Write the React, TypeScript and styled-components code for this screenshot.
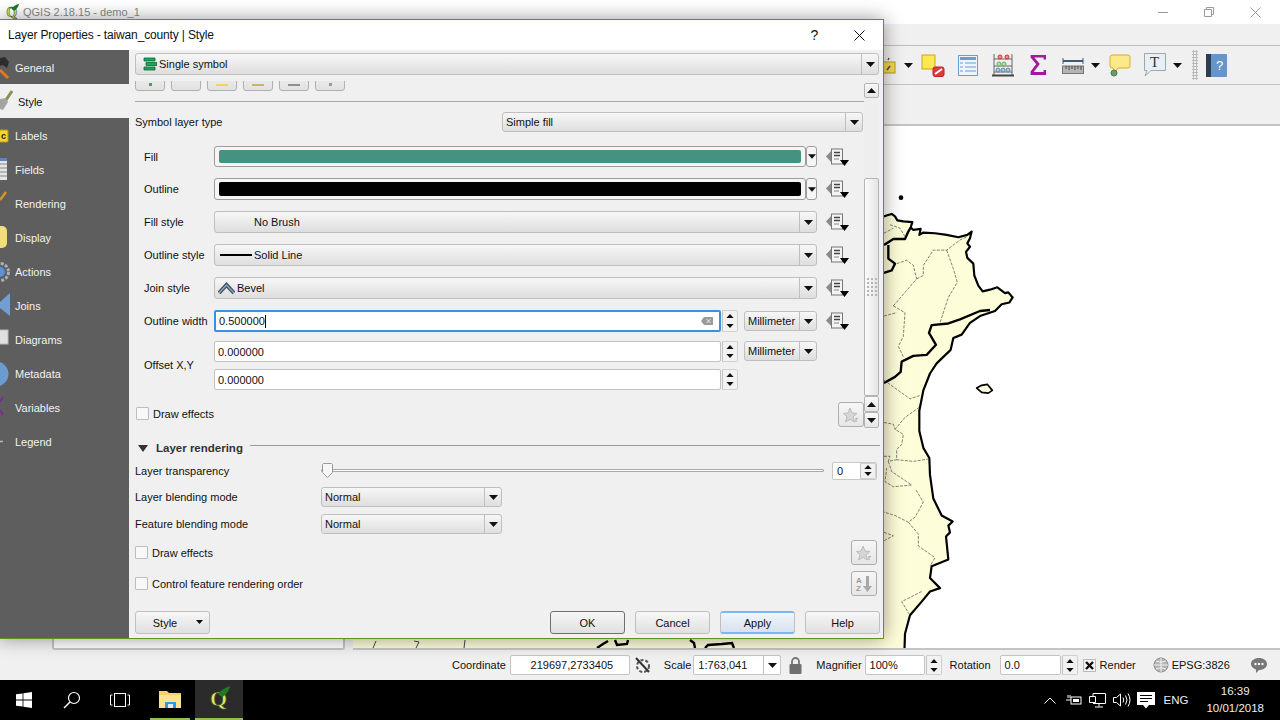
import styled, { createGlobalStyle } from "styled-components";

const GlobalStyle = createGlobalStyle`
  html, body { margin: 0; padding: 0; background: #f0f0f0; overflow: hidden; }
  body { font-family: "Liberation Sans", Arial, sans-serif; font-size: 11px; color: #111; }
  * { box-sizing: border-box; }
`;

const Arrow = ({ up }: { up?: boolean }) => (
  <svg width="9" height="5" viewBox="0 0 9 5">
    <path d={up ? "M0 5 L4.5 0 L9 5Z" : "M0 0 L9 0 L4.5 5Z"} fill="#111" />
  </svg>
);

const DataDefined = () => (
  <svg width="24" height="18" viewBox="0 0 24 18">
    <path d="M0 8.5 L6 2 V15Z" fill="#8a8a8a" />
    <rect x="5.5" y="1" width="11" height="15" fill="#f4f4f4" stroke="#777" />
    <path d="M8 4.5h6M8 7.5h6" stroke="#444" strokeWidth="1.4" />
    <path d="M8 11h5" stroke="#888" />
    <path d="M14 12 H23 L18.5 18Z" fill="#000" />
  </svg>
);

const StarIcon = () => (
  <svg width="16" height="16" viewBox="0 0 16 16">
    <path d="M7 1 L9 6 L14 6.5 L10 10 L11.5 15 L7 12.3 L2.5 15 L4 10 L0.5 6.5 L5 6Z" fill="#d6d6d6" stroke="#bcbcbc" />
    <path d="M13 11v4M13 12q1-1 2-.5" stroke="#aaa" fill="none" />
  </svg>
);

const SortIcon = () => (
  <svg width="18" height="18" viewBox="0 0 18 18">
    <text x="1" y="8" fontSize="8" fontWeight="700" fill="#9a9a9a" fontFamily="Liberation Sans">A</text>
    <text x="1" y="16" fontSize="8" fontWeight="700" fill="#9a9a9a" fontFamily="Liberation Sans">Z</text>
    <path d="M11 1h3v10h3l-4.5 6L8 11h3Z" fill="#a8a8a8" />
  </svg>
);

const QLogo = ({ size }: { size: number }) => (
  <svg width={size} height={size} viewBox="0 0 28 28">
    <text x="5" y="21" fontSize="22" fontWeight="700" fontFamily="Liberation Serif" fill="#dbe76e" stroke="#2c3816" strokeWidth=".7">Q</text>
    <path d="M13 9 C15 6 19 3 25 1 C24 6 21 10 17 12Z" fill="#1f7a22" />
  </svg>
);

const sideIcons: Record<string, React.ReactNode> = {
  General: (
    <>
      <path d="M0 8 L5 7 L9 12 L7 18 L3 15 L0 16Z" fill="#2c2c2c" />
      <path d="M0 20 L8 28" stroke="#e57a17" strokeWidth="3" />
    </>
  ),
  Style: (
    <>
      <path d="M12 7 L6 16" stroke="#8b8d55" strokeWidth="3" />
      <path d="M0 15 L6 14 L8 18 L3 26 L0 25Z" fill="#a5a5a0" />
    </>
  ),
  Labels: (
    <>
      <rect x="-3" y="12" width="11" height="12" rx="1" fill="#f2d330" stroke="#b99a10" />
      <text x="1" y="21" fontSize="9" fontWeight="700" fill="#222" fontFamily="Liberation Sans">c</text>
    </>
  ),
  Fields: (
    <>
      <rect x="-2" y="6" width="9" height="22" fill="#e4e4e4" />
      <rect x="-2" y="6" width="9" height="3" fill="#5c86b8" />
      <path d="M0 12h7M0 16h7M0 20h7M0 24h7" stroke="#888" />
    </>
  ),
  Rendering: <path d="M6 6 L0 14" stroke="#d9912b" strokeWidth="2.5" />,
  Display: <rect x="-6" y="6" width="13" height="22" rx="5" fill="#f3de7c" />,
  Actions: (
    <>
      <circle cx="0" cy="18" r="8.5" fill="none" stroke="#aab0b8" strokeWidth="3" strokeDasharray="3 1.5" />
      <circle cx="0" cy="18" r="5" fill="#5b92d0" />
    </>
  ),
  Joins: <path d="M10 5 V28 L0 20 V14Z" fill="#6f9fd6" />,
  Diagrams: <rect x="-2" y="8" width="10" height="14" fill="#e0e0dc" stroke="#bbb" />,
  Metadata: <circle cx="-4" cy="18" r="12.5" fill="#6c9bd2" />,
  Variables: <path d="M3 7 L0 12 M0 20 L3 25" stroke="#7a2f8e" strokeWidth="2" />,
  Legend: <path d="M0 17.5h3" stroke="#bbb" strokeWidth="1.5" />,
};

const sideItems = ["General", "Style", "Labels", "Fields", "Rendering", "Display", "Actions", "Joins", "Diagrams", "Metadata", "Variables", "Legend"];

const Combo = ({ children, w }: { children?: React.ReactNode; w?: number }) => (
  <ComboBox $w={w}>
    <ComboText>{children}</ComboText>
    <ComboArrow>
      <Arrow />
    </ComboArrow>
  </ComboBox>
);

const Spin = () => (
  <SpinBox>
    <SpinPart>
      <Arrow up />
    </SpinPart>
    <SpinPart>
      <Arrow />
    </SpinPart>
  </SpinBox>
);

const ColorRow = ({ label, color }: { label: string; color: string }) => (
  <FormRow $h={label === "Fill" ? 21 : 22}>
    <span>{label}</span>
    <ColorCell>
      <ColorButton>
        <Swatch $color={color} />
      </ColorButton>
      <ColorDrop>
        <Arrow />
      </ColorDrop>
    </ColorCell>
    <DataDefined />
  </FormRow>
);

const mapCoast =
  "M12 285 L22 282 L35 278 L45 285 L52 297 L70 300 L97 302 L92 318 L100 325 L122 322 L118 340 L130 333 L165 335 L200 340 L235 347 L262 340 L275 330 L270 350 L262 365 L270 375 L258 390 L262 408 L280 425 L283 460 L295 490 L308 507 L330 502 L352 495 L375 512 L385 510 L398 525 L388 540 L365 545 L345 565 L300 580 L270 600 L245 635 L220 645 L212 680 L170 720 L150 750 L130 800 L118 860 L118 920 L130 970 L148 1000 L150 1050 L160 1120 L185 1170 L218 1188 L205 1200 L210 1220 L198 1232 L205 1300 L155 1320 L150 1355 L180 1385 L150 1395 L125 1425 L90 1465 L75 1520 L73 1580";

const MapDrawing = () => (
  <svg width="100%" height="100%" viewBox="353 126 927 522" preserveAspectRatio="none">
    <g transform="translate(880 120) scale(.3333 .338)" fill="none" strokeLinejoin="round">
      <path d={`${mapCoast} L-1590 1580 L-1590 285Z`} fill="#fdfdd9" />
      <path d={mapCoast} stroke="#000" strokeWidth="6.5" />
      <path
        d="M330 562 L300 565 L240 590 L205 602 L155 607 L147 630 L168 665 L140 695 L100 698 L65 715 L62 745 L45 760 L12 778 M12 370 L40 352 L75 352 L85 330 L92 318 M25 370 L25 410 L45 425 L35 445 L12 452"
        stroke="#000"
        strokeWidth="7"
      />
      <path
        d="M40 550 L75 570 L70 640 L55 670 L70 700 M12 580 L50 570 M40 550 L110 470 L100 430 L80 415 L50 425 M110 470 L130 460 L130 430 L160 385 L200 385 L240 355 L262 345 M200 385 L220 440 L232 480 L205 525 L180 600 M12 770 L55 800 L90 825 L120 815 M118 850 L75 880 L45 915 L70 930 L65 960 L50 975 L50 1005 L100 1010 L145 1003 M12 895 L40 900 L45 915 M12 995 L30 995 L25 1010 L50 1005 M25 1010 L35 1040 L80 1070 L95 1080 L40 1085 L15 1070 L20 1030 M108 1095 L130 1130 L105 1175 L85 1190 L45 1170 L12 1160 M85 1190 L115 1225 L115 1260 L165 1295 L150 1320 M125 1395 L65 1425 L90 1465 M12 1220 L40 1230 L12 1245 M30 310 L60 320 L75 345 M12 335 L40 320"
        stroke="#444"
        strokeWidth="2"
        strokeDasharray="9 4"
      />
      <path d="M290 793 L305 785 L322 782 L337 800 L325 808 L305 806Z" fill="#fdfdd9" stroke="#000" strokeWidth="5" />
      <circle cx="63" cy="230" r="7" fill="#000" />
    </g>
    <path d="M597 648 L603 644 L608 641 M615 640 L617 645 L627 644 L628 640 M690 640 L694 643 L695 648 M705 648 L708 645 L722 644 L732 643 L734 648" stroke="#000" strokeWidth="2.4" fill="none" />
    <path d="M373 648 L376 641 M414 641 L419 642 L416 648 M465 640 L464 648" stroke="#444" strokeWidth="1" fill="none" />
  </svg>
);

function App() {
  return (
    <Screen>
      <GlobalStyle />
      <MainWindow>
        <TitleBar>
          <QLogo size={18} />
          <MainTitle>QGIS 2.18.15 - demo_1</MainTitle>
          <WindowButtons>
            <WindowButton>
              <svg width="10" height="10" viewBox="0 0 10 10"><path d="M0 5.5h10" stroke="#999" /></svg>
            </WindowButton>
            <WindowButton>
              <svg width="10" height="10" viewBox="0 0 10 10"><path d="M2.5 2.5V.5h7v7h-2M.5 2.5h7v7h-7Z" stroke="#999" fill="none" /></svg>
            </WindowButton>
            <WindowButton>
              <svg width="11" height="11" viewBox="0 0 11 11"><path d="M.5.5l10 10M10.5.5l-10 10" stroke="#999" /></svg>
            </WindowButton>
          </WindowButtons>
        </TitleBar>
        <MenuBar />
        <ToolBar>
          <ToolSlot $w={16}>
            <svg width="16" height="18" viewBox="0 0 16 18"><rect x="-6" y="6" width="17" height="11" fill="#f2d84f" stroke="#b89c1c" /><path d="M3 14l3-4M4 4l1-2" stroke="#4d3c7a" strokeWidth="1.5" /></svg>
          </ToolSlot>
          <ToolSlot $w={16}><Arrow /></ToolSlot>
          <ToolSlot $w={5} />
          <ToolSlot $w={24}>
            <svg width="24" height="24" viewBox="0 0 24 24"><rect x="1" y="2" width="13" height="14" fill="#fde94f" stroke="#caa51c" /><rect x="12" y="14" width="11" height="9.5" rx="2" fill="#e33a3a" stroke="#b22" /><path d="M14 21l7-5" stroke="#fff" strokeWidth="2" /></svg>
          </ToolSlot>
          <ToolSlot $w={13} />
          <ToolSlot $w={20}>
            <svg width="20" height="21" viewBox="0 0 20 21"><rect x=".5" y=".5" width="19" height="20" fill="#edf4fc" stroke="#6d9ccf" /><rect x="2" y="2" width="16" height="3" fill="#6d9ccf" /><path d="M2 8h3M7 8h11M2 12h3M7 12h11M2 16h3M7 16h11" stroke="#6d9ccf" /></svg>
          </ToolSlot>
          <ToolSlot $w={14} />
          <ToolSlot $w={22}>
            <svg width="22" height="23" viewBox="0 0 22 23"><path d="M2 0v21M20 0v21M2 5h18M2 12h18M2 18h18" stroke="#666" /><path d="M0 21.5h22" stroke="#444" strokeWidth="2" /><circle cx="8" cy="3" r="2" fill="#ee8c8c" stroke="#c33" /><circle cx="15" cy="3" r="2" fill="#ee8c8c" stroke="#c33" /><circle cx="7" cy="10" r="2" fill="#bde0a8" stroke="#6a6" /><circle cx="12" cy="10" r="2" fill="#bde0a8" stroke="#6a6" /><circle cx="6" cy="16" r="2" fill="#a9cbe6" stroke="#58a" /><circle cx="11" cy="16" r="2" fill="#a9cbe6" stroke="#58a" /><circle cx="16" cy="16" r="2" fill="#a9cbe6" stroke="#58a" /></svg>
          </ToolSlot>
          <ToolSlot $w={15} />
          <ToolSlot $w={18}>
            <svg width="16" height="20" viewBox="0 0 16 20"><path d="M15 4.5V1H2v1l6 7-6 8v1.5h13V15" fill="none" stroke="#a01a9e" strokeWidth="2.8" /></svg>
          </ToolSlot>
          <ToolSlot $w={15} />
          <ToolSlot $w={22}>
            <svg width="22" height="18" viewBox="0 0 22 18"><path d="M1 2v6M21 2v6" stroke="#3c5a7a" /><path d="M1 5h20" stroke="#3c5a7a" strokeWidth="2" /><rect x=".5" y="10" width="21" height="7.5" fill="#b4b4b4" stroke="#777" /><path d="M4 10v3M7 10v4M10 10v3M13 10v4M16 10v3M19 10v4" stroke="#444" /></svg>
          </ToolSlot>
          <ToolSlot $w={22}><Arrow /></ToolSlot>
          <ToolSlot $w={3} />
          <ToolSlot $w={22}>
            <svg width="22" height="23" viewBox="0 0 22 23"><path d="M4 1h15q2 0 2 2v9q0 2-2 2H9l-3 4-2-4q-3 0-3-2V3q0-2 3-2Z" fill="#fbe98a" stroke="#d9ad22" /><circle cx="5" cy="19" r="3" fill="#6d9b6a" stroke="#4c7a4a" /></svg>
          </ToolSlot>
          <ToolSlot $w={13} />
          <ToolSlot $w={22}>
            <svg width="22" height="24" viewBox="0 0 22 24"><path d="M.5.5h21v17H7L1 23l2-5.5H.5Z" fill="#e9f0f5" stroke="#9aa" /><text x="6" y="14" fontSize="15" fontFamily="Liberation Serif" fill="#333">T</text></svg>
          </ToolSlot>
          <ToolSlot $w={22}><Arrow /></ToolSlot>
          <ToolSlot $w={4} />
          <Grip />
          <ToolSlot $w={8} />
          <ToolSlot $w={21}>
            <svg width="21" height="23" viewBox="0 0 21 23"><rect x="0" y="0" width="21" height="23" rx="1" fill="#6595c9" /><rect x="0" y="0" width="5" height="23" fill="#2c3e50" /><text x="10" y="16" fontSize="13" fill="#fff" fontFamily="Liberation Sans">?</text></svg>
          </ToolSlot>
        </ToolBar>
        <ToolBarEmpty />
        <Workspace>
          <LeftDock />
          <MapFrame>
            <MapDrawing />
          </MapFrame>
        </Workspace>
        <StatusBar>
          <StatusLabel>Coordinate</StatusLabel>
          <StatusInput $w={120}>
            <CenterText>219697,2733405</CenterText>
          </StatusInput>
          <StatusIcon $ml={5} $w={16}>
            <svg width="16" height="17" viewBox="0 0 16 17"><circle cx="8" cy="9" r="6" fill="none" stroke="#555" strokeWidth="2" strokeDasharray="3 2" /><path d="M1 1l13 14" stroke="#333" strokeWidth="2" /></svg>
          </StatusIcon>
          <StatusLabel $ml={13}>Scale</StatusLabel>
          <ScaleCombo>
            <ScaleValue>1:763,041</ScaleValue>
            <ComboArrow><Arrow /></ComboArrow>
          </ScaleCombo>
          <StatusIcon $ml={8} $w={13}>
            <svg width="13" height="17" viewBox="0 0 13 17"><path d="M3 8V4.5a3.5 3.5 0 0 1 7 0V8" fill="none" stroke="#777" strokeWidth="1.8" /><rect x="0.5" y="7" width="12" height="10" rx="1" fill="#6f6f6f" /></svg>
          </StatusIcon>
          <StatusLabel $ml={14}>Magnifier</StatusLabel>
          <StatusInput $w={60} $ml={3}>100%</StatusInput>
          <StatusSpin><Spin /></StatusSpin>
          <StatusLabel $ml={8}>Rotation</StatusLabel>
          <StatusInput $w={61} $ml={9}>0.0</StatusInput>
          <StatusSpin><Spin /></StatusSpin>
          <RenderCheck>
            <svg width="9" height="9" viewBox="0 0 9 9"><path d="M1 1l7 7M8 1L1 8" stroke="#111" strokeWidth="2.4" /></svg>
          </RenderCheck>
          <StatusLabel $ml={4}>Render</StatusLabel>
          <StatusIcon $ml={17} $w={16}>
            <svg width="16" height="16" viewBox="0 0 16 16"><circle cx="8" cy="8" r="7" fill="#b5b5b5" stroke="#888" /><path d="M1 8h14M8 1v14M3 4q5 2.5 10 0M3 12q5-2.5 10 0" stroke="#f2f2f2" fill="none" /></svg>
          </StatusIcon>
          <StatusLabel $ml={3}>EPSG:3826</StatusLabel>
          <StatusIcon $ml={21} $w={16}>
            <svg width="16" height="15" viewBox="0 0 16 15"><path d="M8 0c4.5 0 8 2.5 8 6s-3.500 6-8 6l-3 3v-3.5C2 10.5 0 8.5 0 6c0-3.5 3.5-6 8-6Z" fill="#777" /><circle cx="4.5" cy="6" r="1.2" fill="#fff" /><circle cx="8" cy="6" r="1.2" fill="#fff" /><circle cx="11.5" cy="6" r="1.2" fill="#fff" /></svg>
          </StatusIcon>
        </StatusBar>
      </MainWindow>

      <TaskBar>
        <TaskSlot $w={48}>
          <svg width="16" height="16" viewBox="0 0 16 16"><path d="M0 2.3l6.6-.9v6.2H0ZM7.400 1.300L16 0v7.600H7.400ZM0 8.400h6.600v6.200L0 13.700ZM7.400 8.400H16V16l-8.600-1.300Z" fill="#fff" /></svg>
        </TaskSlot>
        <TaskSlot $w={48}>
          <svg width="18" height="18" viewBox="0 0 18 18"><circle cx="11" cy="7" r="5.5" fill="none" stroke="#fff" strokeWidth="1.2" /><path d="M7 11l-6 6" stroke="#fff" strokeWidth="1.5" /></svg>
        </TaskSlot>
        <TaskSlot $w={48}>
          <svg width="20" height="14" viewBox="0 0 20 14"><path d="M2.5 2H.5v10h2M17.5 2h2v10h-2" fill="none" stroke="#fff" /><rect x="4.5" y=".5" width="11" height="13" fill="none" stroke="#fff" /></svg>
        </TaskSlot>
        <TaskSlot $w={40} $open $ml={6}>
          <svg width="22" height="18" viewBox="0 0 22 18"><path d="M0 1h8l2 2h12v15H0Z" fill="#f6d365" /><path d="M0 5h22v13H0Z" fill="#fbe394" /><rect x="6" y="12" width="11" height="6" fill="#2d9bdc" /><rect x="9" y="14" width="5" height="4" fill="#d8f0fc" /></svg>
        </TaskSlot>
        <TaskSlot $w={48} $open $active $ml={5}>
          <QLogo size={28} />
        </TaskSlot>
        <Tray>
          <TrayIcon $w={24}>
            <svg width="12" height="7" viewBox="0 0 12 7"><path d="M.5 6.5L6 1l5.5 5.5" fill="none" stroke="#fff" /></svg>
          </TrayIcon>
          <TrayIcon $w={24}>
            <svg width="16" height="12" viewBox="0 0 16 12"><rect x="5" y="3" width="10" height="7" fill="none" stroke="#fff" /><rect x="7" y="5" width="6" height="3" fill="#fff" /><path d="M0 6h5M2 1v3M4 1v3" stroke="#fff" /></svg>
          </TrayIcon>
          <TrayIcon $w={24}>
            <svg width="17" height="15" viewBox="0 0 17 15"><path d="M4 3.5V.5h12.5v10H4M.5 3.5h6v6h-6ZM10 10.5v3M6 14h8" fill="none" stroke="#fff" /></svg>
          </TrayIcon>
          <TrayIcon $w={24}>
            <svg width="18" height="14" viewBox="0 0 18 14"><path d="M.5 4.5h3l4-3.500v12l-4-3.500h-3Z M10 4.500q1.500 2.500 0 5M12.500 2.500q3 4.500 0 9M15 .5q4 6.500 0 13" fill="none" stroke="#fff" /></svg>
          </TrayIcon>
          <TrayIcon $w={24}>
            <svg width="18" height="17" viewBox="0 0 18 17"><path d="M0 0h18v13h-6l-3 3.500L6 13H0Z" fill="#fff" /><path d="M3 3.500h12M3 6.500h12M3 9.500h8" stroke="#000" /></svg>
          </TrayIcon>
          <TrayText>ENG</TrayText>
          <Clock>
            <span>16:39</span>
            <span>10/01/2018</span>
          </Clock>
        </Tray>
      </TaskBar>

      <Dialog>
        <DialogTitle>
          <DialogTitleText>Layer Properties - taiwan_county | Style</DialogTitleText>
          <DialogHelp>?</DialogHelp>
          <DialogClose>
            <svg width="11" height="11" viewBox="0 0 11 11"><path d="M.5.5l10 10M10.5.5l-10 10" stroke="#111" /></svg>
          </DialogClose>
        </DialogTitle>
        <DialogBody>
          <SideBar>
            {sideItems.map((item) => (
              <SideItem key={item} $active={item === "Style"}>
                <SideIcon $wide={item === "Style"} viewBox={`0 0 ${item === "Style" ? 18 : 15} 34`}>
                  {sideIcons[item]}
                </SideIcon>
                <SideLabel>{item}</SideLabel>
              </SideItem>
            ))}
          </SideBar>
          <Content>
            <RendererCombo>
              <ComboText>
                <svg width="14" height="14" viewBox="0 0 14 14"><path d="M1 1h11v3H1ZM3 5.500h11v3H3ZM1 10h11v3H1Z" fill="#1aa55b" stroke="#0b6b38" strokeWidth=".8" /></svg>
                Single symbol
              </ComboText>
              <ComboArrow><Arrow /></ComboArrow>
            </RendererCombo>
            <ScrollArea>
              <ScrollContent>
                <SymbolButtons>
                  {["#5b9a5b", "", "#f2d84f", "#c8b46a", "#8f8f8f", "#999"].map((c, i) => (
                    <SymbolButton key={i}>{c && <SymbolMark $color={c} $wide={i === 2 || i === 3 || i === 4} />}</SymbolButton>
                  ))}
                </SymbolButtons>
                <Separator />
                <SymbolType>
                  <span>Symbol layer type</span>
                  <Combo w={361}>Simple fill</Combo>
                </SymbolType>
                <Form>
                  <ColorRow label="Fill" color="#459280" />
                  <ColorRow label="Outline" color="#000" />
                  <FormRow>
                    <span>Fill style</span>
                    <Combo>
                      <NoBrush>No Brush</NoBrush>
                    </Combo>
                    <DataDefined />
                  </FormRow>
                  <FormRow>
                    <span>Outline style</span>
                    <Combo>
                      <LineSample />
                      Solid Line
                    </Combo>
                    <DataDefined />
                  </FormRow>
                  <FormRow>
                    <span>Join style</span>
                    <Combo>
                      <svg width="17" height="14" viewBox="0 0 17 14"><path d="M1 12L8.5 4 16 12" fill="none" stroke="#3d4f5f" strokeWidth="4" /><path d="M1 12L8.5 4 16 12" fill="none" stroke="#86a6c4" strokeWidth="1.5" /></svg>
                      Bevel
                    </Combo>
                    <DataDefined />
                  </FormRow>
                  <FormRow>
                    <span>Outline width</span>
                    <InputCell>
                      <TextInput $focus>
                        0.500000
                        <Caret />
                        <ClearIcon>
                          <svg width="12" height="8" viewBox="0 0 12 8"><path d="M3 0h9v8H3L0 4Z" fill="#9a9a9a" /><path d="M5.5 2l4 4M9.5 2l-4 4" stroke="#eee" /></svg>
                        </ClearIcon>
                      </TextInput>
                      <Spin />
                      <Combo w={73}>Millimeter</Combo>
                    </InputCell>
                    <DataDefined />
                  </FormRow>
                  <OffsetBlock>
                    <OffsetLabel>Offset X,Y</OffsetLabel>
                    <OffsetInputs>
                      <InputCell>
                        <TextInput>0.000000</TextInput>
                        <Spin />
                        <Combo w={73}>Millimeter</Combo>
                      </InputCell>
                      <InputCell>
                        <TextInput>0.000000</TextInput>
                        <Spin />
                        <UnitSpacer />
                      </InputCell>
                    </OffsetInputs>
                  </OffsetBlock>
                </Form>
                <EffectsRow>
                  <EffectsCheck>
                    <Check />
                    Draw effects
                  </EffectsCheck>
                  <IconButton><StarIcon /></IconButton>
                </EffectsRow>
              </ScrollContent>
              <ScrollBar>
                <ScrollButton $h={15}><Arrow up /></ScrollButton>
                <ScrollTrack />
                <ScrollThumb>
                  <ThumbGrip />
                </ScrollThumb>
                <ScrollButton $h={16}><Arrow up /></ScrollButton>
                <ScrollButton $h={16}><Arrow /></ScrollButton>
              </ScrollBar>
            </ScrollArea>

            <GroupHeader>
              <svg width="10" height="7" viewBox="0 0 10 7"><path d="M0 0h10L5 7Z" fill="#333" /></svg>
              <GroupTitle>Layer rendering</GroupTitle>
              <GroupLine />
            </GroupHeader>

            <RenderRow $mt={3} $h={19}>
              <RenderLabel>Layer transparency</RenderLabel>
              <SliderGroove>
                <SliderHandle>
                  <svg width="11" height="15" viewBox="0 0 11 15"><path d="M1.5.5h8l1 1v8l-5 5-5-5v-8Z" fill="#f6f6f6" stroke="#999" /></svg>
                </SliderHandle>
              </SliderGroove>
              <SpinField>
                0
                <Spin />
              </SpinField>
            </RenderRow>
            <RenderRow $mt={7} $h={20}>
              <RenderLabel>Layer blending mode</RenderLabel>
              <Combo w={181}>Normal</Combo>
            </RenderRow>
            <RenderRow $mt={7} $h={20}>
              <RenderLabel>Feature blending mode</RenderLabel>
              <Combo w={181}>Normal</Combo>
            </RenderRow>
            <RenderRow $mt={6} $h={25}>
              <CheckLabel>
                <Check />
                Draw effects
              </CheckLabel>
              <IconButton $end><StarIcon /></IconButton>
            </RenderRow>
            <RenderRow $mt={6} $h={25}>
              <CheckLabel>
                <Check />
                Control feature rendering order
              </CheckLabel>
              <IconButton $end><SortIcon /></IconButton>
            </RenderRow>

            <ButtonRow>
              <StyleButton>
                Style
                <svg width="7" height="4" viewBox="0 0 7 4"><path d="M0 0h7L3.5 4Z" fill="#111" /></svg>
              </StyleButton>
              <ButtonGroup>
                <PushButton $kind="default">OK</PushButton>
                <PushButton>Cancel</PushButton>
                <PushButton $kind="hover">Apply</PushButton>
                <PushButton>Help</PushButton>
              </ButtonGroup>
            </ButtonRow>
          </Content>
        </DialogBody>
      </Dialog>
    </Screen>
  );
}

const Screen = styled.div`
  position: relative;
  width: 1280px;
  height: 720px;
  display: flex;
  flex-direction: column;
  overflow: hidden;
`;

const MainWindow = styled.div`
  height: 680px;
  display: flex;
  flex-direction: column;
  background: #f0f0f0;
`;

const TitleBar = styled.div`
  height: 24px;
  background: #fff;
  display: flex;
  align-items: center;
  padding-left: 3px;
  flex: none;
`;

const MainTitle = styled.div`
  font-size: 11px;
  color: #8a8a8a;
  margin-left: 2px;
`;

const WindowButtons = styled.div`
  margin-left: auto;
  margin-right: 2px;
  display: flex;
`;

const WindowButton = styled.div`
  width: 46px;
  height: 22px;
  display: flex;
  align-items: center;
  justify-content: center;
`;

const MenuBar = styled.div`
  height: 22px;
  border-bottom: 1px solid #bdbdbd;
  flex: none;
`;

const ToolBar = styled.div`
  height: 39px;
  flex: none;
  border-bottom: 1px solid #c4c4c4;
  display: flex;
  align-items: center;
  padding-left: 884px;
`;

const ToolSlot = styled.div<{ $w: number }>`
  width: ${(p) => p.$w}px;
  display: flex;
  align-items: center;
  justify-content: center;
  overflow: hidden;
  flex: none;
`;

const Grip = styled.div`
  width: 6px;
  height: 30px;
  flex: none;
  background-image: radial-gradient(#bbb 1px, transparent 1.2px);
  background-size: 3px 3px;
`;

const ToolBarEmpty = styled.div`
  height: 39px;
  flex: none;
`;

const Workspace = styled.div`
  height: 526px;
  flex: none;
  display: flex;
  padding-left: 52px;
  gap: 8px;
`;

const LeftDock = styled.div`
  width: 293px;
  background: #fff;
  border: 2px solid #c4c4c4;
  border-top: 0;
  border-radius: 0 0 3px 3px;
  flex: none;
`;

const MapFrame = styled.div`
  flex: 1;
  background: #fff;
  border-top: 2px solid #c4c4c4;
  border-bottom: 2px solid #c4c4c4;
  overflow: hidden;
  svg {
    display: block;
  }
`;

const StatusBar = styled.div`
  flex: 1;
  display: flex;
  align-items: center;
  padding-left: 452px;
`;

const StatusLabel = styled.span<{ $ml?: number }>`
  margin-left: ${(p) => p.$ml ?? 0}px;
  flex: none;
`;

const StatusInput = styled.div<{ $w: number; $ml?: number }>`
  width: ${(p) => p.$w}px;
  height: 20px;
  margin-left: ${(p) => p.$ml ?? 4}px;
  background: #fff;
  border: 1px solid #c4c4c4;
  border-radius: 2px;
  display: flex;
  align-items: center;
  padding-left: 4px;
  flex: none;
`;

const CenterText = styled.span`
  width: 100%;
  text-align: center;
`;

const StatusIcon = styled.div<{ $ml: number; $w: number }>`
  margin-left: ${(p) => p.$ml}px;
  width: ${(p) => p.$w}px;
  display: flex;
  flex: none;
`;

const ScaleCombo = styled.div`
  width: 88px;
  height: 20px;
  margin-left: 2px;
  background: #fff;
  border: 1px solid #c4c4c4;
  border-radius: 2px;
  display: flex;
  flex: none;
`;

const ScaleValue = styled.span`
  flex: 1;
  padding-left: 4px;
  line-height: 18px;
`;

const StatusSpin = styled.div`
  height: 20px;
  flex: none;
  display: flex;
`;

const RenderCheck = styled.div`
  width: 13px;
  height: 13px;
  margin-left: 5px;
  background: #f4f4f4;
  border: 1px solid #bbb;
  display: flex;
  align-items: center;
  justify-content: center;
  flex: none;
`;

const TaskBar = styled.div`
  height: 40px;
  background: #000;
  display: flex;
  flex: none;
  color: #fff;
`;

const TaskSlot = styled.div<{ $w: number; $open?: boolean; $active?: boolean; $ml?: number }>`
  width: ${(p) => p.$w}px;
  margin-left: ${(p) => p.$ml ?? 0}px;
  display: flex;
  align-items: center;
  justify-content: center;
  background: ${(p) => (p.$active ? "#2b2b2b" : "transparent")};
  border-bottom: ${(p) => (p.$open ? "2px solid #8ec24e" : "0")};
  flex: none;
`;

const Tray = styled.div`
  margin-left: auto;
  display: flex;
  align-items: center;
  padding-right: 16px;
`;

const TrayIcon = styled.div<{ $w: number }>`
  width: ${(p) => p.$w}px;
  display: flex;
  justify-content: center;
`;

const TrayText = styled.span`
  margin-left: 6px;
  font-size: 11.5px;
  color: #eee;
`;

const Clock = styled.div`
  margin-left: 18px;
  display: flex;
  flex-direction: column;
  align-items: center;
  font-size: 11.5px;
  line-height: 17px;
  color: #eee;
`;

const Dialog = styled.div`
  position: absolute;
  left: -2px;
  top: 19px;
  width: 886px;
  height: 620px;
  display: flex;
  flex-direction: column;
  background: #f0f0f0;
  border: 1px solid #5f9320;
  box-shadow: 0 0 18px rgba(0, 0, 0, 0.4);
`;

const DialogTitle = styled.div`
  height: 30px;
  flex: none;
  background: #fff;
  display: flex;
  align-items: center;
  padding-left: 9px;
`;

const DialogTitleText = styled.span`
  font-size: 12px;
  letter-spacing: -0.15px;
  color: #111;
  flex: 1;
`;

const DialogHelp = styled.span`
  width: 45px;
  text-align: center;
  font-size: 14px;
`;

const DialogClose = styled.div`
  width: 45px;
  display: flex;
  justify-content: center;
  margin-right: 1px;
`;

const DialogBody = styled.div`
  flex: 1;
  display: flex;
  min-height: 0;
`;

const SideBar = styled.div`
  width: 130px;
  padding-left: 1px;
  background: #5e5e5e;
  flex: none;
  overflow: hidden;
`;

const SideItem = styled.div<{ $active?: boolean }>`
  height: 34px;
  display: flex;
  align-items: center;
  color: ${(p) => (p.$active ? "#111" : "#f2f2f2")};
  background: ${(p) => (p.$active ? "#f0f0f0" : "transparent")};
`;

const SideIcon = styled.svg<{ $wide?: boolean }>`
  width: ${(p) => (p.$wide ? 18 : 15)}px;
  height: 34px;
  flex: none;
`;

const SideLabel = styled.span`
  padding-top: 2px;
`;

const Content = styled.div`
  flex: 1;
  min-width: 0;
  padding: 3px 3px 0 6px;
  display: flex;
  flex-direction: column;
`;

const ComboBox = styled.div<{ $w?: number }>`
  height: 100%;
  width: ${(p) => (p.$w ? `${p.$w}px` : "100%")};
  display: flex;
  flex: ${(p) => (p.$w ? "none" : "1")};
  background: linear-gradient(#f7f7f7, #dedede);
  border: 1px solid #bfbfbf;
  border-radius: 3px;
`;

const ComboText = styled.div`
  flex: 1;
  min-width: 0;
  display: flex;
  align-items: center;
  gap: 2px;
  padding-left: 3px;
  white-space: nowrap;
`;

const ComboArrow = styled.div`
  width: 17px;
  flex: none;
  display: flex;
  align-items: center;
  justify-content: center;
  border-left: 1px solid #bfbfbf;
`;

const RendererCombo = styled(ComboBox)`
  height: 22px;
  width: 744px;
  flex: none;
  padding-left: 4px;
`;

const ScrollArea = styled.div`
  height: 347px;
  margin-top: 6px;
  width: 744px;
  flex: none;
  display: flex;
  overflow: hidden;
`;

const ScrollContent = styled.div`
  width: 729px;
  flex: none;
  display: flex;
  flex-direction: column;
`;

const SymbolButtons = styled.div`
  display: flex;
  gap: 6px;
  margin-top: -19px;
  flex: none;
`;

const SymbolButton = styled.div`
  width: 30px;
  height: 29px;
  background: linear-gradient(#f7f7f7, #e2e2e2);
  border: 1px solid #b0b0b0;
  border-radius: 3px;
  display: flex;
  align-items: flex-end;
  justify-content: center;
  padding-bottom: 4px;
`;

const SymbolMark = styled.div<{ $color: string; $wide?: boolean }>`
  width: ${(p) => (p.$wide ? 12 : 3)}px;
  height: ${(p) => (p.$wide ? 2 : 3)}px;
  background: ${(p) => p.$color};
`;

const Separator = styled.div`
  height: 1px;
  width: 729px;
  background: #a8a8a8;
  margin-top: 10px;
  flex: none;
`;

const SymbolType = styled.div`
  height: 20px;
  margin-top: 10px;
  display: flex;
  align-items: center;
  justify-content: space-between;
  padding-right: 1px;
  flex: none;
`;

const Form = styled.div`
  margin-top: 14px;
  padding-left: 9px;
  display: flex;
  flex-direction: column;
  gap: 11px;
  flex: none;
`;

const FormRow = styled.div<{ $h?: number }>`
  height: ${(p) => p.$h ?? 22}px;
  display: grid;
  grid-template-columns: 70px 603px 33px;
  align-items: center;
  justify-items: end;
  > span {
    justify-self: start;
  }
`;

const ColorCell = styled.div`
  width: 100%;
  height: 100%;
  display: flex;
  gap: 0;
`;

const ColorButton = styled.div`
  flex: 1;
  padding: 3px 4px;
  background: #f5f5f5;
  border: 1px solid #9d9d9d;
  border-radius: 3px;
`;

const Swatch = styled.div<{ $color: string }>`
  height: 100%;
  background: ${(p) => p.$color};
  border-radius: 2px;
`;

const ColorDrop = styled.div`
  width: 11px;
  flex: none;
  background: #f5f5f5;
  border: 1px solid #9d9d9d;
  border-radius: 3px;
  display: flex;
  align-items: center;
  justify-content: center;
  svg {
    width: 8px;
  }
`;

const NoBrush = styled.span`
  margin-left: 36px;
`;

const LineSample = styled.span`
  width: 32px;
  height: 2px;
  margin-left: 2px;
  background: #000;
`;

const InputCell = styled.div`
  width: 100%;
  height: 100%;
  display: flex;
  align-items: center;
  > div:last-child {
    margin-left: 6px;
    height: 20px;
  }
`;

const TextInput = styled.div<{ $focus?: boolean }>`
  position: relative;
  flex: 1;
  height: 100%;
  display: flex;
  align-items: center;
  padding-left: 3px;
  background: #fff;
  border: ${(p) => (p.$focus ? "2px solid #3f8fe0" : "1px solid #c2c2c2")};
  border-radius: 2px;
  font-size: 11px;
`;

const Caret = styled.span`
  width: 1px;
  height: 13px;
  background: #000;
`;

const ClearIcon = styled.span`
  position: absolute;
  right: 6px;
  top: 5px;
  display: flex;
`;

const SpinBox = styled.div`
  width: 16px;
  height: 100%;
  margin-left: 1px;
  flex: none;
  display: flex;
  flex-direction: column;
  background: #f2f2f2;
  border: 1px solid #d0d0d0;
  border-left: 1px solid #c4c4c4;
  border-radius: 0 2px 2px 0;
`;

const SpinPart = styled.div`
  flex: 1;
  display: flex;
  align-items: center;
  justify-content: center;
  svg {
    width: 8px;
    height: 4px;
  }
`;

const OffsetBlock = styled.div`
  display: grid;
  grid-template-columns: 70px 603px;
  align-items: center;
  margin-top: -2px;
`;

const OffsetLabel = styled.span`
  padding-bottom: 2px;
`;

const OffsetInputs = styled.div`
  display: flex;
  flex-direction: column;
  gap: 7px;
  > div {
    height: 21px;
  }
  > div > div:last-child {
    align-self: flex-start;
  }
`;

const UnitSpacer = styled.div`
  width: 73px;
  flex: none;
`;

const EffectsRow = styled.div`
  height: 25px;
  margin-top: 12px;
  padding-left: 1px;
  display: flex;
  align-items: center;
  justify-content: space-between;
  flex: none;
`;

const CheckLabel = styled.label`
  display: flex;
  align-items: center;
  gap: 4px;
`;

const EffectsCheck = styled(CheckLabel)`
  margin-bottom: 2px;
`;

const Check = styled.span`
  width: 13px;
  height: 13px;
  background: #f8f8f8;
  border: 1px solid #bdbdbd;
  border-radius: 1px;
`;

const IconButton = styled.div<{ $end?: boolean }>`
  width: 26px;
  height: 25px;
  margin-left: ${(p) => (p.$end ? "auto" : "0")};
  margin-right: ${(p) => (p.$end ? "3px" : "0")};
  background: linear-gradient(#f6f6f6, #e6e6e6);
  border: 1px solid #aeaeae;
  border-radius: 3px;
  display: flex;
  align-items: center;
  justify-content: center;
`;

const ScrollBar = styled.div`
  width: 15px;
  padding-top: 2px;
  flex: none;
  display: flex;
  flex-direction: column;
`;

const ScrollButton = styled.div<{ $h: number }>`
  height: ${(p) => p.$h}px;
  flex: none;
  background: linear-gradient(#f8f8f8, #e6e6e6);
  border: 1px solid #b4b4b4;
  border-radius: 2px;
  display: flex;
  align-items: center;
  justify-content: center;
`;

const ScrollTrack = styled.div`
  height: 80px;
  flex: none;
  background-color: #eeeeee;
  background-image: radial-gradient(#d4d4d4 0.6px, transparent 0.7px);
  background-size: 2px 2px;
`;

const ScrollThumb = styled.div`
  flex: 1;
  background: linear-gradient(90deg, #fbfbfb, #e4e4e4);
  border: 1px solid #b4b4b4;
  border-radius: 2px;
  display: flex;
  align-items: center;
  justify-content: center;
`;

const ThumbGrip = styled.div`
  width: 11px;
  height: 20px;
  background-image: radial-gradient(#b4b4b4 0.8px, transparent 1px);
  background-size: 4px 4px;
`;

const GroupHeader = styled.div`
  height: 20px;
  margin-top: 10px;
  padding-left: 3px;
  display: flex;
  align-items: center;
  flex: none;
`;

const GroupTitle = styled.span`
  font-weight: 700;
  margin-left: 8px;
  color: #333;
  font-size: 11.5px;
`;

const GroupLine = styled.div`
  flex: 1;
  height: 1px;
  margin-left: 7px;
  margin-top: -6px;
  background: #9a9a9a;
`;

const RenderRow = styled.div<{ $mt: number; $h: number }>`
  height: ${(p) => p.$h}px;
  margin-top: ${(p) => p.$mt}px;
  display: flex;
  align-items: center;
  flex: none;
`;

const RenderLabel = styled.span`
  width: 186px;
  flex: none;
`;

const SliderGroove = styled.div`
  position: relative;
  width: 503px;
  height: 3px;
  background: #fafafa;
  border: 1px solid #aaa;
  border-radius: 1px;
  flex: none;
`;

const SliderHandle = styled.div`
  position: absolute;
  left: 0;
  top: -7px;
  display: flex;
`;

const SpinField = styled.div`
  width: 45px;
  height: 18px;
  margin-left: 8px;
  padding-left: 4px;
  background: #fff;
  border: 1px solid #c8c8c8;
  border-radius: 2px;
  display: flex;
  align-items: center;
  justify-content: space-between;
  flex: none;
`;

const ButtonRow = styled.div`
  height: 23px;
  margin-top: 15px;
  display: flex;
  justify-content: space-between;
  flex: none;
`;

const ButtonGroup = styled.div`
  display: flex;
  gap: 10px;
`;

const BaseButton = styled.div`
  width: 75px;
  height: 23px;
  background: linear-gradient(#f7f7f7, #e0e0e0);
  border: 1px solid #c0c0c0;
  border-radius: 3px;
  display: flex;
  align-items: center;
  justify-content: center;
`;

const StyleButton = styled(BaseButton)`
  position: relative;
  padding-right: 15px;
  svg {
    position: absolute;
    right: 6px;
    top: 8px;
  }
`;

const PushButton = styled(BaseButton)<{ $kind?: "default" | "hover" }>`
  border-color: ${(p) => (p.$kind === "default" ? "#707070" : "#c0c0c0")};
  ${(p) =>
    p.$kind === "hover"
      ? `background: linear-gradient(#f0f5fb, #d7e2ef);
         border-top: 2px solid #7db7f0;
         border-bottom: 2px solid #7db7f0;`
      : ""}
`;

export default App;
